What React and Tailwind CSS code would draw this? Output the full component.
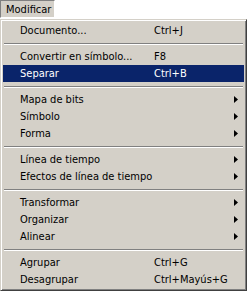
import React from 'react';

// Classic Windows "Modificar" menu
const items = [
  { label: 'Documento...', shortcut: 'Ctrl+J' },
  'sep',
  { label: 'Convertir en símbolo...', shortcut: 'F8' },
  { label: 'Separar', shortcut: 'Ctrl+B', active: true },
  'sep',
  { label: 'Mapa de bits', sub: true },
  { label: 'Símbolo', sub: true },
  { label: 'Forma', sub: true },
  'sep',
  { label: 'Línea de tiempo', sub: true },
  { label: 'Efectos de línea de tiempo', sub: true },
  'sep',
  { label: 'Transformar', sub: true },
  { label: 'Organizar', sub: true },
  { label: 'Alinear', sub: true },
  'sep',
  { label: 'Agrupar', shortcut: 'Ctrl+G' },
  { label: 'Desagrupar', shortcut: 'Ctrl+Mayús+G' },
];

const Arrow = ({ color }) => (
  <svg width="4" height="7" viewBox="0 0 4 7" className="block">
    <path d="M0 0 L4 3.5 L0 7 Z" fill={color} />
  </svg>
);

const MenuRow = ({ item }) => (
  <div
    className={`relative flex items-center h-[17px] pl-[17px] pr-[6px] ${
      item.active ? 'bg-[#0a246a] text-white' : 'text-black'
    }`}
  >
    <span className="w-[134px] whitespace-nowrap">{item.label}</span>
    {item.shortcut && <span className="whitespace-nowrap">{item.shortcut}</span>}
    {item.sub && (
      <span className="ml-auto">
        <Arrow color={item.active ? '#fff' : '#000'} />
      </span>
    )}
  </div>
);

export default function App() {
  return (
    <div
      className="w-[247px] h-[291px] bg-white overflow-hidden text-[11px] leading-none"
      style={{ fontFamily: '"DejaVu Sans Condensed", "Liberation Sans", sans-serif' }}
    >
      <div className="flex">
        <div className="h-[18px] w-[55px] bg-[#d4d0c8] border-t border-l border-[#808080] border-r-white border-b-white border-r border-b flex items-center pl-[5px] text-black">
          Modificar
        </div>
      </div>
      <div className="mt-[1px] bg-[#d4d0c8] border border-t-[#d4d0c8] border-l-[#d4d0c8] border-r-[#404040] border-b-[#404040] shadow-[inset_1px_1px_0_#ffffff,inset_-1px_-1px_0_#808080] p-[2px]">
        {items.map((item, i) =>
          item === 'sep' ? (
            <div key={i} className="h-[9px] flex flex-col justify-center px-[1px]">
              <div className="h-px bg-[#808080]" />
              <div className="h-px bg-white" />
            </div>
          ) : (
            <MenuRow key={i} item={item} />
          )
        )}
      </div>
    </div>
  );
}
